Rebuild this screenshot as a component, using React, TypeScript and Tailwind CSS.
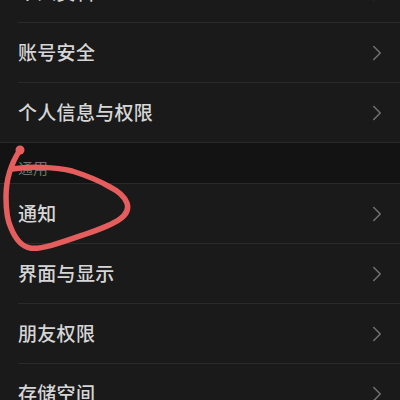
import { ChevronRight } from "lucide-react"

const FONT = "[font-family:'Noto_Sans_CJK_SC','Noto_Sans',sans-serif]"

function Row({ label }: { label: string }) {
  return (
    <div className="h-[59px] flex items-center pl-[18px] pr-[10px]">
      <div className="flex-1 mb-[2px] text-[19px] leading-none font-medium tracking-[0.3px] text-[#d6d6d6]">{label}</div>
      <ChevronRight className="w-[26px] h-[26px] text-[#6e6e6e]" strokeWidth={1.5} />
    </div>
  )
}

function Divider({ full }: { full?: boolean }) {
  return (
    <div className={full ? "h-px bg-[#2a2a2a]" : "h-px ml-[18px] bg-[#2a2a2a]"} />
  )
}

export default function App() {
  return (
    <div className={`relative w-[400px] h-[400px] overflow-hidden bg-[#1a1a1a] ${FONT}`}>
      <div className="-mt-[37px]">
        <Row label="个人资料" />
        <Divider />
        <Row label="账号安全" />
        <Divider />
        <Row label="个人信息与权限" />
        <Divider full />
        <div className="h-[40px] bg-[#131313] flex items-end pb-[4px] pl-[18px] text-[15px] leading-[22px] text-[#707070]">
          通用
        </div>
        <Divider full />
        <Row label="通知" />
        <Divider />
        <Row label="界面与显示" />
        <Divider />
        <Row label="朋友权限" />
        <Divider />
        <Row label="存储空间" />
      </div>
      {/* hand drawn circle */}
      <svg className="absolute inset-0 pointer-events-none" width="400" height="400" viewBox="0 0 400 400" fill="none">
        <path
          d="M20 150 C12 162 6 178 6 197 C6 212 8 222 11 228 C15 238 20 246 30 248 C40 250 60 243 83 235 C98 230 112 225 120 219 C127 214 129 209 127 203 C124 195 118 191 110 187 C98 180 88 176 72 171 C56 167 30 166 12 169"
          stroke="#e65d5e"
          strokeWidth="5.5"
          strokeLinecap="round"
          strokeLinejoin="round"
        />
        <circle cx="20" cy="150" r="4.5" fill="#e65d5e" />
      </svg>
    </div>
  )
}
